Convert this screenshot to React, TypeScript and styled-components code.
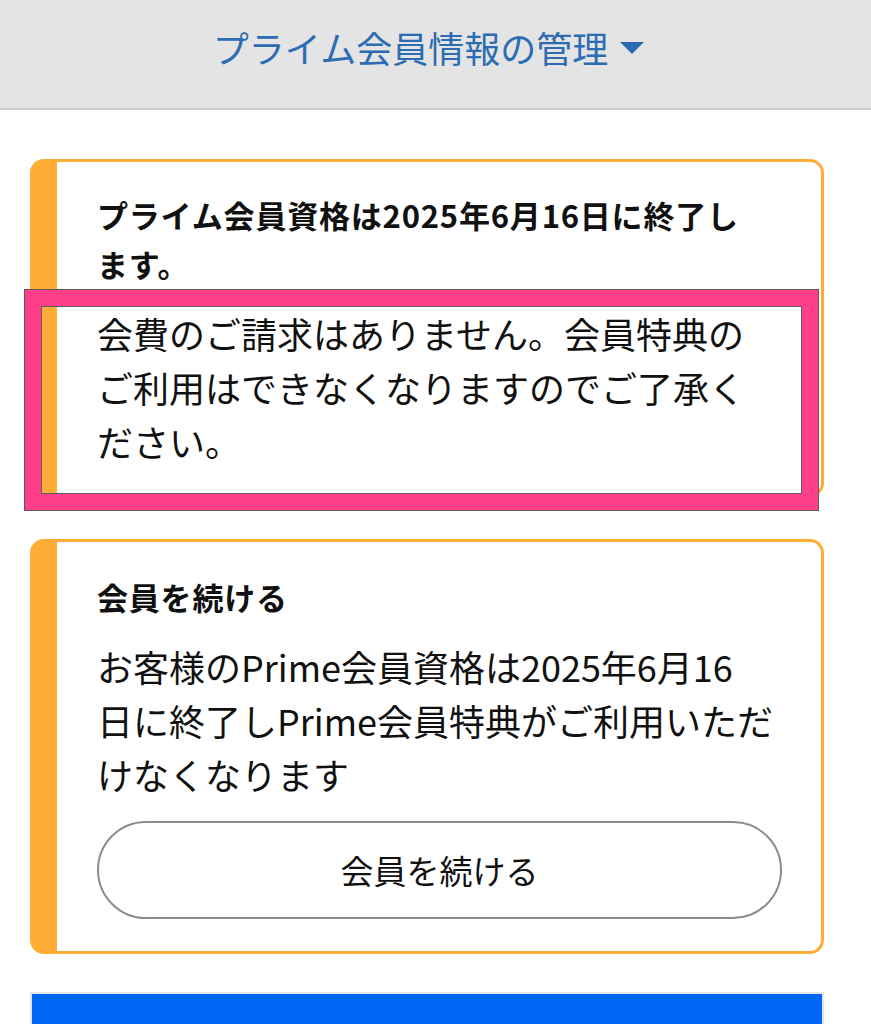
import styled, { createGlobalStyle } from "styled-components";

const GlobalStyle = createGlobalStyle`
  html, body {
    margin: 0;
    padding: 0;
    background: #ffffff;
  }
  body {
    font-family: "Noto Sans CJK JP", "Noto Sans", sans-serif;
    color: #0f1111;
    overflow: hidden;
  }
`;

const Colors = {
  orange: "#ffad36",
  blue: "#2b6cb2",
  pink: "#ff3f8a",
  text: "#111111",
  headerBg: "#e4e4e4",
};

const Page = styled.div`
  display: flex;
  flex-direction: column;
  min-height: 1024px;
`;

const Header = styled.header`
  height: 110px;
  box-sizing: border-box;
  background-color: ${Colors.headerBg};
  border-bottom: 2px solid #cbcbcb;
  display: flex;
  align-items: center;
  justify-content: center;
  padding-right: 14px;
  padding-bottom: 14px;
`;

const HeaderTitle = styled.button`
  display: flex;
  align-items: center;
  gap: 12px;
  border: none;
  background: none;
  padding: 0;
  font-family: inherit;
  font-size: 36px;
  font-weight: 400;
  color: ${Colors.blue};
  cursor: pointer;
`;

const Caret = styled.svg`
  width: 24px;
  height: 12px;
  margin-top: 2px;
`;

const Content = styled.main`
  display: flex;
  flex-direction: column;
  gap: 42px;
  padding: 49px 47px 0 30px;
`;

const Card = styled.section<{ $pt: number; $pb: number }>`
  position: relative;
  border: 3px solid ${Colors.orange};
  border-left-width: 27px;
  border-radius: 14px;
  background: #ffffff;
  padding: ${(p) => `${p.$pt}px 39px ${p.$pb}px 40px`};
  display: flex;
  flex-direction: column;
`;

const CardTitle = styled.h2`
  margin: 0;
  font-size: 31px;
  line-height: 49px;
  letter-spacing: 0.8px;
  font-weight: 700;
  color: ${Colors.text};
`;

const CardText = styled.p`
  margin: 18px 0 0;
  font-size: 36px;
  line-height: 54px;
  font-weight: 400;
  color: ${Colors.text};
`;

const OutlineButton = styled.button`
  margin-top: 20px;
  height: 98px;
  width: 100%;
  border: 2px solid #8c8c8c;
  border-radius: 49px;
  background: #ffffff;
  font-family: inherit;
  font-size: 33px;
  color: ${Colors.text};
  cursor: pointer;
`;

// pink annotation frame drawn over the first card's message
const Highlight = styled.div`
  position: absolute;
  left: -32px;
  top: 128px;
  width: 793px;
  height: 220px;
  box-sizing: border-box;
  border: 16px solid ${Colors.pink};
  box-shadow: 0 0 0 1px #5b5b5b;
  pointer-events: none;

  &::after {
    content: "";
    position: absolute;
    inset: 0;
    border: 1px solid #5b5b5b;
  }
`;

const BottomArea = styled.div`
  padding: 0 47px 0 30px;
  margin-top: 38px;
`;

const BlueBar = styled.div`
  height: 80px;
  background-color: #0066f6;
  border: 2px solid #e6e6e6;
  border-bottom: none;
`;

const App = () => {
  return (
    <Page>
      <GlobalStyle />
      <Header>
        <HeaderTitle type="button">
          プライム会員情報の管理
          <Caret viewBox="0 0 24 12">
            <polygon points="0,0 24,0 12,12" fill={Colors.blue} />
          </Caret>
        </HeaderTitle>
      </Header>

      <Content>
        <Card $pt={28} $pb={26}>
          <CardTitle>
            プライム会員資格は2025年6月16日に終了し
            <br />
            ます。
          </CardTitle>
          <CardText>
            会費のご請求はありません。会員特典の
            <br />
            ご利用はできなくなりますのでご了承く
            <br />
            ださい。
          </CardText>
          <Highlight />
        </Card>

        <Card $pt={30} $pb={32}>
          <CardTitle>会員を続ける</CardTitle>
          <CardText>
            お客様のPrime会員資格は2025年6月16
            <br />
            日に終了しPrime会員特典がご利用いただ
            <br />
            けなくなります
          </CardText>
          <OutlineButton type="button">会員を続ける</OutlineButton>
        </Card>
      </Content>

      <BottomArea>
        <BlueBar />
      </BottomArea>
    </Page>
  );
};

export default App;
